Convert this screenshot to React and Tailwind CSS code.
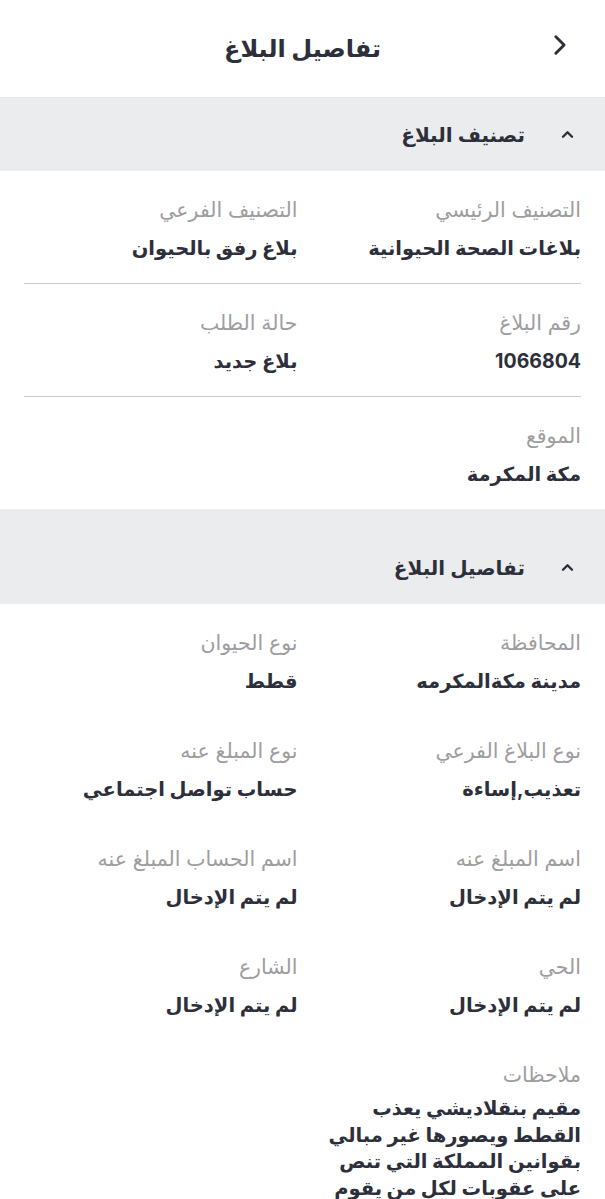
const FONT = "font-['Inter','DejaVu_Sans',sans-serif]"

function Chevron({ dir = "right", className = "" }) {
  const d = dir === "right" ? "M5 3l9 9-9 9" : "M2 9l6-6 6 6"
  const vb = dir === "right" ? "0 0 18 24" : "0 0 16 12"
  return (
    <svg viewBox={vb} fill="none" stroke="currentColor" strokeWidth="3.2" strokeLinecap="round" strokeLinejoin="round" className={className}>
      <path d={d} />
    </svg>
  )
}

function SectionHeader({ title, top = false }) {
  return (
    <div className={`bg-[#ebecee] ${top ? "" : "pt-[22px]"}`}>
      <div className="flex h-[73px] items-center gap-[36px] pr-[31px]">
        <Chevron dir="up" className="h-[9px] w-[13px] text-[#2d2f3b]" />
        <span className="text-[20px] font-semibold text-[#2d2f3b]">{title}</span>
      </div>
    </div>
  )
}

function Field({ label, value }) {
  return (
    <div>
      <div className="text-[20.5px] leading-[28px] text-[#9d9d9f]">{label}</div>
      <div className="mt-[8px] text-[19.5px] font-bold leading-[32px] text-[#2d2f3b]">{value}</div>
    </div>
  )
}

function Row({ children, divider, tight }) {
  return (
    <div className={`grid grid-cols-2 gap-x-[10px] pt-[25px] ${tight ? "pb-[15px]" : "pb-[19px]"} ${divider ? "border-b border-[#cacaca]" : ""}`}>
      {children}
    </div>
  )
}

export default function App() {
  return (
    <div dir="rtl" className={`min-h-screen bg-white ${FONT}`}>
      {/* top bar */}
      <div className="relative flex h-[98px] items-center justify-center border-b border-[#e6e6e8]">
        <h1 className="text-[24px] font-bold text-[#2d2f3b]">تفاصيل البلاغ</h1>
        <button className="absolute right-[37px] top-[34px] text-[#2d2f3b]">
          <Chevron dir="right" className="h-[22px] w-[17px]" />
        </button>
      </div>

      <SectionHeader title="تصنيف البلاغ" top />
      <div className="px-[24px]">
        <Row divider>
          <Field label="التصنيف الرئيسي" value="بلاغات الصحة الحيوانية" />
          <Field label="التصنيف الفرعي" value="بلاغ رفق بالحيوان" />
        </Row>
        <Row divider>
          <Field label="رقم البلاغ" value="1066804" />
          <Field label="حالة الطلب" value="بلاغ جديد" />
        </Row>
        <Row>
          <Field label="الموقع" value="مكة المكرمة" />
        </Row>
      </div>

      <SectionHeader title="تفاصيل البلاغ" />
      <div className="px-[24px]">
        <Row tight>
          <Field label="المحافظة" value="مدينة مكةالمكرمه" />
          <Field label="نوع الحيوان" value="قطط" />
        </Row>
        <Row tight>
          <Field label="نوع البلاغ الفرعي" value="تعذيب,إساءة" />
          <Field label="نوع المبلغ عنه" value="حساب تواصل اجتماعي" />
        </Row>
        <Row tight>
          <Field label="اسم المبلغ عنه" value="لم يتم الإدخال" />
          <Field label="اسم الحساب المبلغ عنه" value="لم يتم الإدخال" />
        </Row>
        <Row tight>
          <Field label="الحي" value="لم يتم الإدخال" />
          <Field label="الشارع" value="لم يتم الإدخال" />
        </Row>
        <div className="pt-[25px] pb-[20px]">
          <div className="text-[20.5px] leading-[28px] text-[#9d9d9f]">ملاحظات</div>
          <div className="mt-[6px] w-[262px] text-[19.5px] font-bold leading-[26.5px] text-[#2d2f3b]">
            مقيم بنقلاديشي يعذب القطط ويصورها غير مبالي بقوانين المملكة التي تنص على عقوبات لكل من يقوم أو يساعد على تعذيب الحيوانات
          </div>
        </div>
      </div>
    </div>
  )
}
